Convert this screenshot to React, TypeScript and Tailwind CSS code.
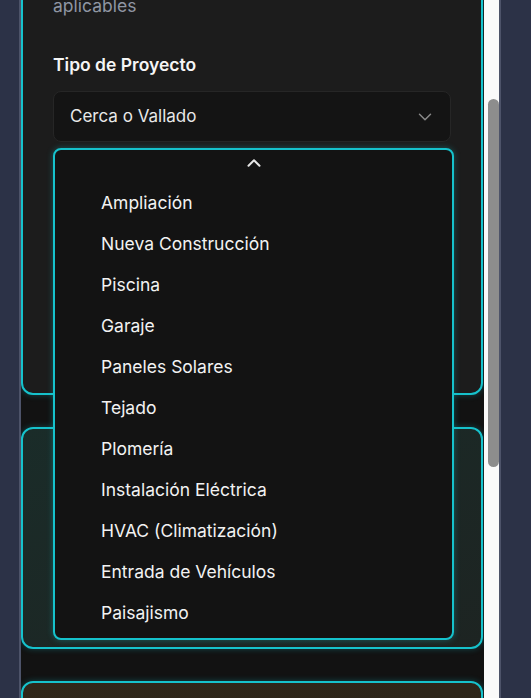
import React from "react";
import { ChevronDown, ChevronUp } from "lucide-react";

const projectTypes = [
  "Ampliación",
  "Nueva Construcción",
  "Piscina",
  "Garaje",
  "Paneles Solares",
  "Tejado",
  "Plomería",
  "Instalación Eléctrica",
  "HVAC (Climatización)",
  "Entrada de Vehículos",
  "Paisajismo",
];

const SelectMenu = () => {
  return (
    <div className="absolute left-[32px] top-[148px] w-[401px] h-[492px] rounded-lg border-2 border-[#16c2cc] bg-[#131313] shadow-[0_0_6px_rgba(22,194,204,0.35)] overflow-hidden">
      <div className="flex h-[33px] items-center justify-center pb-[8px] text-[#e5e5e5]">
        <ChevronUp size={22} strokeWidth={2.2} />
      </div>
      <ul className="flex flex-col">
        {projectTypes.map((type) => (
          <li
            key={type}
            className="flex h-[41px] items-center pl-[46px] text-[17.5px] text-[#f2f2f2]"
          >
            {type}
          </li>
        ))}
      </ul>
    </div>
  );
};

export default function App() {
  return (
    <div className="flex h-[698px] w-[531px] overflow-hidden bg-[#2c3247] font-['Inter',sans-serif]">
      <div className="w-[19px] shrink-0" />
      <div className="w-[2px] shrink-0 bg-[#4d5369]" />

      <div className="relative w-[463px] shrink-0 overflow-hidden bg-[#121212]">
        <div className="flex flex-col gap-8 -mt-[62px] pr-px">
          {/* permit form card */}
          <div className="rounded-xl border-2 border-[#16c2cc] bg-[#1c1c1c] px-[30px] py-[30px] shadow-[0_0_6px_rgba(22,194,204,0.3)]">
            <p className="text-[17.5px] leading-6 text-[#8f96a3]">
              Complete los datos para ver los permisos
              <br />
              aplicables
            </p>
            <label className="mt-[35px] mb-[14px] block text-[17.5px] leading-6 font-semibold text-[#f5f5f5]">
              Tipo de Proyecto
            </label>
            <button className="flex h-[51px] w-full items-center justify-between rounded-lg border border-[#262626] bg-[#141414] pl-4 pr-[14px] text-[17px] text-[#e8e8e8]">
              <span>Cerca o Vallado</span>
              <ChevronDown size={22} strokeWidth={1.6} className="text-[#8a8a8a]" />
            </button>
            <div className="mt-6 h-[197px]">
              <label className="block text-[17.5px] leading-6 font-semibold text-[#f5f5f5]">
                Ubicación
              </label>
              <div className="mt-[14px] h-[51px] rounded-lg border border-[#262626] bg-[#141414]" />
            </div>
          </div>

          <div className="h-[222px] rounded-xl border-2 border-[#16c2cc] bg-gradient-to-br from-[#1a2c29] to-[#1d2422] shadow-[0_0_6px_rgba(22,194,204,0.3)]" />

          <div className="h-[120px] rounded-xl border-2 border-[#16c2cc] bg-gradient-to-br from-[#30271a] to-[#2a2318] shadow-[0_0_6px_rgba(22,194,204,0.3)]" />
        </div>

        <SelectMenu />
      </div>

      {/* scrollbar */}
      <div className="w-[15px] shrink-0 bg-[#fafafa] pl-[4px] pt-[99px]">
        <div className="h-[368px] w-[11px] rounded-full bg-[#8d8d8d]" />
      </div>
      <div className="w-[2px] shrink-0 bg-[#4d5369]" />
      <div className="flex-1" />
    </div>
  );
}
